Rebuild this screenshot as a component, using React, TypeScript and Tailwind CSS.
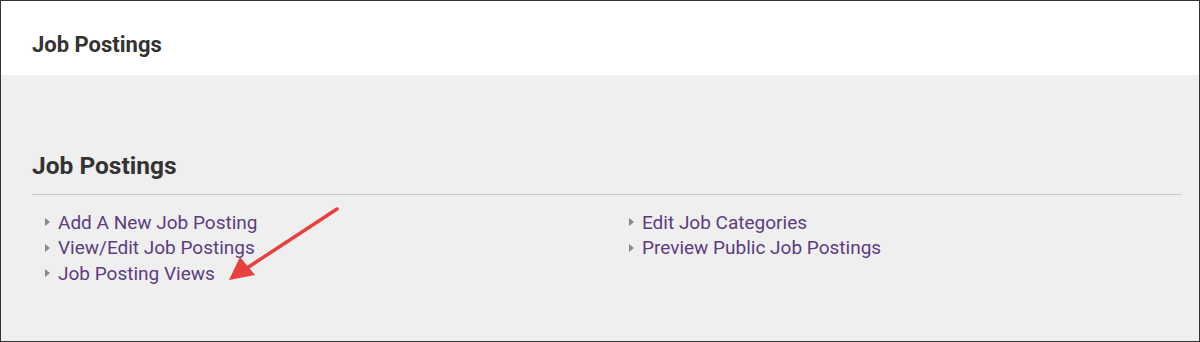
import React from 'react';

const leftLinks = ['Add A New Job Posting', 'View/Edit Job Postings', 'Job Posting Views'];
const rightLinks = ['Edit Job Categories', 'Preview Public Job Postings'];

const LinkItem = ({ label }: { label: string }) => (
    <li className="flex items-center h-[25.5px]">
        <span className="w-0 h-0 border-y-[4px] border-y-transparent border-l-[5px] border-l-[#8a8a8a] ml-[1px] mr-[8px]" />
        <a href="#" className="text-[19px] text-[#5c3c83] leading-none">{label}</a>
    </li>
);

export default function App() {
    return (
        <div
            className="relative w-[1200px] h-[342px] border border-[#333] bg-[#efefef] overflow-hidden"
            style={{ fontFamily: 'Roboto, "Noto Sans", sans-serif' }}
        >
            <header className="h-[74px] bg-white pl-[31px] pt-[33px]">
                <h1 className="text-[22px] font-bold text-[#333] leading-none">Job Postings</h1>
            </header>

            <section className="pl-[31px] pr-[18px] pt-[79px]">
                <h2 className="text-[24.5px] font-bold text-[#333] leading-none pb-[15px]">Job Postings</h2>
                <div className="border-t border-[#c8c8c8]" />
                <div className="grid grid-cols-[584px_1fr] pl-[12px] pt-[15px]">
                    <ul>
                        {leftLinks.map((l) => <LinkItem key={l} label={l} />)}
                    </ul>
                    <ul>
                        {rightLinks.map((l) => <LinkItem key={l} label={l} />)}
                    </ul>
                </div>
            </section>

            {/* annotation arrow */}
            <svg className="absolute left-0 top-0" width="1200" height="342" viewBox="0 0 1200 342">
                <line x1="336" y1="208" x2="246" y2="267" stroke="#e8403f" strokeWidth="3.5" strokeLinecap="round" />
                <polygon points="228,279 239,256 254,274" fill="#e8403f" />
            </svg>
        </div>
    );
}
